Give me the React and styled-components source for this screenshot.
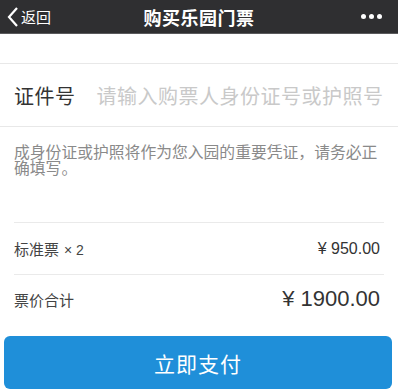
import React from "react";
import styled, { createGlobalStyle } from "styled-components";

const GlobalStyle = createGlobalStyle`
  html, body {
    margin: 0;
    padding: 0;
    background: #ffffff;
    font-family: "Noto Sans CJK SC", "Noto Sans", sans-serif;
  }
`;

const Page = styled.div`
  width: 398px;
  height: 392px;
  display: flex;
  flex-direction: column;
  background: #ffffff;
  overflow: hidden;
`;

const NavBar = styled.div`
  height: 33px;
  flex-shrink: 0;
  display: grid;
  grid-template-columns: 80px 1fr 80px;
  align-items: center;
  background: #2f2f31;
  border-bottom: 1px solid #5a5a5c;
  color: #ffffff;
`;

const Back = styled.div`
  display: flex;
  align-items: center;
  gap: 2px;
  padding-left: 6px;
  font-size: 15px;
`;

const Title = styled.div`
  text-align: center;
  font-size: 18px;
  font-weight: 600;
  letter-spacing: 0.5px;
`;

const More = styled.div`
  display: flex;
  justify-content: flex-end;
  gap: 3px;
  padding-right: 16px;
`;

const Dot = styled.span`
  width: 5px;
  height: 5px;
  border-radius: 50%;
  background: #ffffff;
`;

const Gap = styled.div`
  height: ${(p) => p.h}px;
  flex-shrink: 0;
`;

const IdRow = styled.div`
  height: 62px;
  display: flex;
  align-items: center;
  gap: 21px;
  padding: 0 14px;
  border-top: 1px solid #e8e8e8;
  border-bottom: 1px solid #e8e8e8;
`;

const Label = styled.span`
  font-size: 20px;
  letter-spacing: 0.5px;
  color: #333333;
  white-space: nowrap;
`;

const Placeholder = styled.span`
  font-size: 20px;
  letter-spacing: 0.5px;
  color: #c9c9c9;
  white-space: nowrap;
`;

const Note = styled.div`
  height: 95px;
  box-sizing: border-box;
  padding: 17px 14px 0;
  font-size: 15.8px;
  line-height: 16px;
  color: #8a8a8a;
`;

const List = styled.div`
  padding: 0 14px;
`;

const Row = styled.div`
  height: ${(p) => p.h}px;
  display: flex;
  align-items: center;
  justify-content: space-between;
  border-top: 1px solid #eaeaea;
  padding-right: 4px;
`;

const RowLabel = styled.span`
  font-size: 15px;
  color: #444444;
`;

const Times = styled.span`
  font-family: "Liberation Sans", sans-serif;
  font-size: 14px;
  margin-left: 5px;
`;

const Price = styled.span`
  font-family: "Liberation Sans", "Noto Sans CJK SC", sans-serif;
  font-size: ${(p) => p.size}px;
  color: #333333;
`;

const PayButton = styled.button`
  margin: 13px 6px 0 4px;
  height: 53px;
  border: none;
  border-radius: 6px;
  background: #1f8fd9;
  color: #ffffff;
  font-family: "Noto Sans CJK SC", sans-serif;
  font-size: 21px;
  letter-spacing: 1px;
  cursor: pointer;
`;

export default function App() {
  return (
    <Page>
      <GlobalStyle />
      <NavBar>
        <Back>
          <svg width="13" height="22" viewBox="0 0 13 22">
            <path d="M11 2 L3 11 L11 20" fill="none" stroke="#fff" strokeWidth="2.2" />
          </svg>
          返回
        </Back>
        <Title>购买乐园门票</Title>
        <More>
          <Dot />
          <Dot />
          <Dot />
        </More>
      </NavBar>
      <Gap h={29} />
      <IdRow>
        <Label>证件号</Label>
        <Placeholder>请输入购票人身份证号或护照号</Placeholder>
      </IdRow>
      <Note>成身份证或护照将作为您入园的重要凭证，请务必正确填写。</Note>
      <List>
        <Row h={51}>
          <RowLabel>
            标准票<Times>× 2</Times>
          </RowLabel>
          <Price size={16}>¥ 950.00</Price>
        </Row>
        <Row h={48}>
          <RowLabel>票价合计</RowLabel>
          <Price size={22}>¥ 1900.00</Price>
        </Row>
      </List>
      <PayButton>立即支付</PayButton>
    </Page>
  );
}
